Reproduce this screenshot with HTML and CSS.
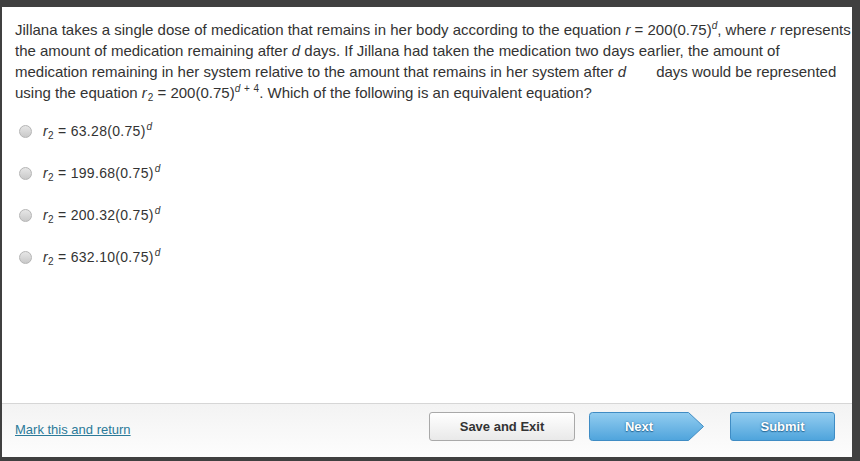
FILE: index.html
```html
<!DOCTYPE html>
<html lang="en">
<head>
  <meta charset="UTF-8" />
  <title>Question</title>
  <link rel="stylesheet" href="styles.css">
</head>
<body>
  <div class="frame">
    <main class="question">
      <p class="stem">
        Jillana takes a single dose of medication that remains in her body according to the equation <i>r</i> = 200(0.75)<sup><i>d</i></sup>, where <i>r</i> represents the amount of medication remaining after <i>d</i> days. If Jillana had taken the medication two days earlier, the amount of<br>
        medication remaining in her system relative to the amount that remains in her system after <i>d</i><span class="gap"></span>days would be represented using the equation <i>r</i><sub>2</sub> = 200(0.75)<sup><i>d</i> + 4</sup>. Which of the following is an equivalent equation?
      </p>
      <ul class="choices">
        <li class="choice"><span class="radio"></span><span class="eq"><i>r</i><sub>2</sub> = 63.28(0.75)<sup><i>d</i></sup></span></li>
        <li class="choice"><span class="radio"></span><span class="eq"><i>r</i><sub>2</sub> = 199.68(0.75)<sup><i>d</i></sup></span></li>
        <li class="choice"><span class="radio"></span><span class="eq"><i>r</i><sub>2</sub> = 200.32(0.75)<sup><i>d</i></sup></span></li>
        <li class="choice"><span class="radio"></span><span class="eq"><i>r</i><sub>2</sub> = 632.10(0.75)<sup><i>d</i></sup></span></li>
      </ul>
    </main>
    <footer class="actions">
      <a href="#" class="mark-link">Mark this and return</a>
      <div class="buttons">
        <button class="btn btn-plain">Save and Exit</button>
        <button class="btn btn-next">
          <svg class="next-shape" width="116" height="29" viewBox="0 0 116 29">
            <defs>
              <linearGradient id="nextGrad" x1="0" y1="0" x2="0" y2="1">
                <stop offset="0" stop-color="#93cdf0"/>
                <stop offset="1" stop-color="#4fa4dc"/>
              </linearGradient>
            </defs>
            <path d="M3.5 0.5 H99.5 L114.5 14.5 L99.5 28.5 H3.5 Q0.5 28.5 0.5 25.5 V3.5 Q0.5 0.5 3.5 0.5 Z" fill="url(#nextGrad)" stroke="#3f8cc4"/>
          </svg>
          <span class="btn-label">Next</span>
        </button>
        <button class="btn btn-blue">Submit</button>
      </div>
    </footer>
  </div>
</body>
</html>
```

FILE: styles.css
```css
* {
  box-sizing: border-box;
}
html, body {
  margin: 0;
  height: 100%;
}
body {
  background: #404040;
  font-family: "Liberation Sans", Arial, sans-serif;
  color: #333;
  padding: 7px 8px 4px 2px;
}
.frame {
  background: #fff;
  height: 450px;
  display: flex;
  flex-direction: column;
}
.question {
  flex: 1;
  padding: 12px 0 0 13px;
}
.stem {
  margin: 0;
  font-size: 15px;
  line-height: 21px;
  width: 840px;
}
.stem sup, .stem sub, .eq sup, .eq sub {
  font-size: 10px;
  line-height: 0;
}
.stem sup {
  vertical-align: 6px;
  word-spacing: 1px;
}
.stem sub {
  vertical-align: -3px;
  margin-left: 1px;
}
.gap {
  display: inline-block;
  width: 30px;
}
.choices {
  list-style: none;
  margin: 7px 0 0;
  padding: 0 0 0 4px;
}
.choice {
  display: flex;
  align-items: center;
  gap: 11px;
  height: 42px;
}
.radio {
  width: 13px;
  height: 13px;
  border-radius: 50%;
  border: 1px solid #b5b5b5;
  background: linear-gradient(#e6e6e6, #c9c9c9);
}
.eq {
  font-size: 14px;
  letter-spacing: 0.3px;
}
.eq sup {
  vertical-align: 6px;
  margin-left: 1px;
}
.eq sub {
  vertical-align: -3px;
}
.actions {
  height: 54px;
  border-top: 1px solid #d6d6d6;
  background: linear-gradient(#f3f3f3, #fdfdfd);
  display: flex;
  align-items: center;
  justify-content: space-between;
  padding: 0 17px 8px 13px;
}
.mark-link {
  color: #2b7a99;
  font-size: 13px;
  margin-top: 6px;
}
.buttons {
  display: flex;
  align-items: center;
}
.btn {
  font-family: "Liberation Sans", Arial, sans-serif;
  font-weight: bold;
  font-size: 13px;
  height: 29px;
  border-radius: 3px;
  cursor: pointer;
  padding: 0;
}
.btn-plain {
  width: 146px;
  color: #333;
  border: 1px solid #a9a9a9;
  background: linear-gradient(#ffffff, #e9e9e9);
  margin-right: 14px;
}
.btn-next {
  position: relative;
  width: 116px;
  border: none;
  background: none;
  color: #fff;
  margin-right: 25px;
}
.next-shape {
  position: absolute;
  left: 0;
  top: 0;
}
.btn-label {
  position: relative;
  display: block;
  width: 100px;
  text-shadow: 0 0 2px #2a6c9a, 0 1px 1px #2a6c9a;
}
.btn-blue {
  width: 105px;
  color: #fff;
  border: 1px solid #3f8cc4;
  background: linear-gradient(#93cdf0, #4fa4dc);
  text-shadow: 0 0 2px #2a6c9a, 0 1px 1px #2a6c9a;
}
```
